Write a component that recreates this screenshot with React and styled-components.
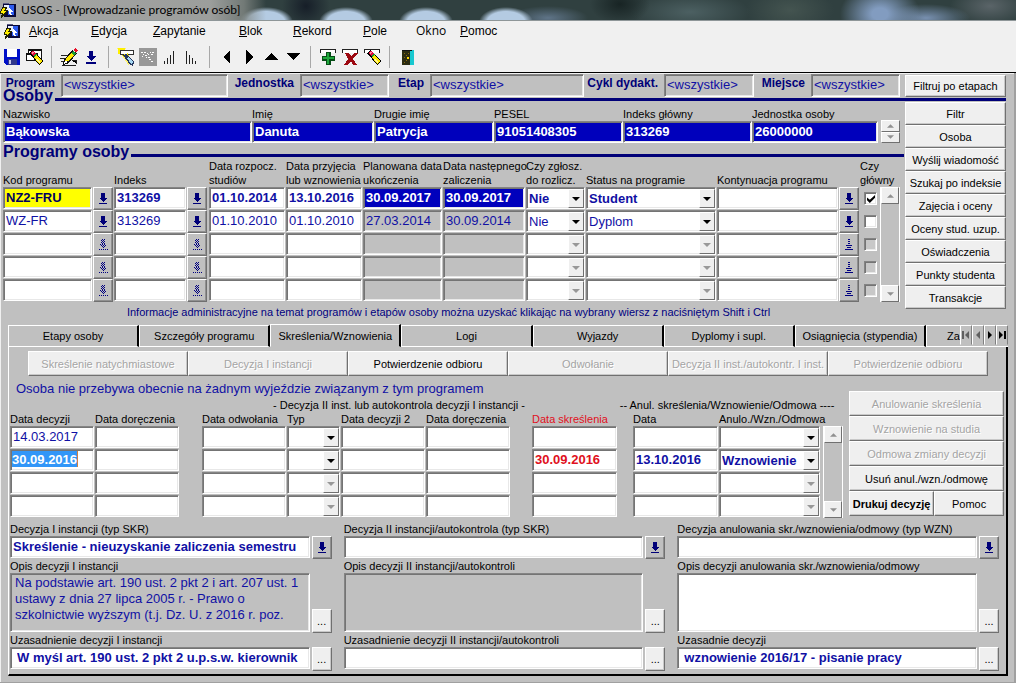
import React, { useState } from "react";
import styled, { createGlobalStyle, css } from "styled-components";

const menuItems = [
  { text: "Akcja", width: 62 },
  { text: "Edycja", width: 62 },
  { text: "Zapytanie", width: 86 },
  { text: "Blok", width: 54 },
  { text: "Rekord", width: 70 },
  { text: "Pole", width: 53 },
  { text: "Okno", width: 44, plain: true },
  { text: "Pomoc", width: 62 },
];

const toolGroups = [
  ["save", "clearForm"],
  ["edit", "list"],
  ["query", "runQuery", "sortAsc", "sortDesc"],
  ["left", "right", "up", "down"],
  ["add", "remove", "clear"],
  ["exit"],
];

const toolNames = {
  save: "Zapisz",
  clearForm: "Wyczyść formularz",
  edit: "Edytuj",
  list: "Lista wartości",
  query: "Wprowadź zapytanie",
  runQuery: "Wykonaj zapytanie",
  sortAsc: "Sortuj rosnąco",
  sortDesc: "Sortuj malejąco",
  left: "Poprzedni blok",
  right: "Następny blok",
  up: "Poprzedni rekord",
  down: "Następny rekord",
  add: "Dodaj rekord",
  remove: "Usuń rekord",
  clear: "Wyczyść rekord",
  exit: "Wyjście",
};

const filters = ["Program", "Jednostka", "Etap", "Cykl dydakt.", "Miejsce"];

const person = [
  { label: "Nazwisko", value: "Bąkowska" },
  { label: "Imię", value: "Danuta" },
  { label: "Drugie imię", value: "Patrycja" },
  { label: "PESEL", value: "91051408305" },
  { label: "Indeks główny", value: "313269" },
  { label: "Jednostka osoby", value: "26000000" },
];

const sideButtons = [
  "Filtr",
  "Osoba",
  "Wyślij wiadomość",
  "Szukaj po indeksie",
  "Zajęcia i oceny",
  "Oceny stud. uzup.",
  "Oświadczenia",
  "Punkty studenta",
  "Transakcje",
];

const programCols = [90, 21, 73, 22, 77, 77, 80, 83, 60, 131, 122, 21, 18];

const programs = [
  {
    code: "NZ2-FRU",
    index: "313269",
    start: "01.10.2014",
    admitted: "13.10.2016",
    planned: "30.09.2017",
    next: "30.09.2017",
    settle: "Nie",
    status: "Student",
    main: true,
    current: true,
  },
  {
    code: "WZ-FR",
    index: "313269",
    start: "01.10.2010",
    admitted: "01.10.2010",
    planned: "27.03.2014",
    next: "30.09.2014",
    settle: "Nie",
    status: "Dyplom",
  },
  { empty: true },
  { empty: true },
  { empty: true },
];

const tabs = [
  "Etapy osoby",
  "Szczegóły programu",
  "Skreślenia/Wznowienia",
  "Logi",
  "Wyjazdy",
  "Dyplomy i supl.",
  "Osiągnięcia (stypendia)",
];

const stepButtons = [
  { text: "Skreślenie natychmiastowe" },
  { text: "Decyzja I instancji" },
  { text: "Potwierdzenie odbioru", enabled: true },
  { text: "Odwołanie" },
  { text: "Decyzja II inst./autokontr. I inst." },
  { text: "Potwierdzenie odbioru" },
];

const decisionCols = [85, 85, 22, 85, 54, 85, 85, 21, 86, 15, 86, 102];

const decisions = [
  { date: "14.03.2017" },
  {
    date: "30.09.2016",
    removed: "30.09.2016",
    resumed: "13.10.2016",
    kind: "Wznowienie",
    current: true,
  },
  { empty: true },
  { empty: true },
];

const details = [
  {
    id: "first",
    labels: [
      "Decyzja I instancji (typ SKR)",
      "Opis decyzji I instancji",
      "Uzasadnienie decyzji I instancji",
    ],
    decision: "Skreślenie - nieuzyskanie zaliczenia semestru",
    text: "Na podstawie art. 190 ust. 2 pkt 2 i art. 207 ust. 1\nustawy z dnia 27 lipca 2005 r. - Prawo o\nszkolnictwie wyższym (t.j. Dz. U. z 2016 r. poz.",
    reason: "W myśl art. 190 ust. 2 pkt 2 u.p.s.w. kierownik",
    locked: true,
  },
  {
    id: "second",
    labels: [
      "Decyzja II instancji/autokontrola (typ SKR)",
      "Opis decyzji II instancji/autokontroli",
      "Uzasadnienie decyzji II instancji/autokontroli",
    ],
    locked: true,
  },
  {
    id: "cancel",
    labels: [
      "Decyzja anulowania skr./wznowienia/odmowy (typ WZN)",
      "Opis decyzji anulowania skr./wznowienia/odmowy",
      "Uzasadnie decyzji",
    ],
    reason: "wznowienie 2016/17 - pisanie pracy",
  },
];

/* ---------- icons ---------- */

const Eraser = () => (
  <>
    <path d="M4 5l4-3 10 11-4 4z" fill="#000" />
    <path d="M9 9l3-2 5 6-3 3z" fill="#ffe800" />
    <path d="M12 10l3 4-1 1-3-4z" fill="#fff8a0" />
    <path d="M8 8l3-2 1 1-3 2z" fill="#0a9a30" />
    <path d="M5 5l3-2 3 3-3 2z" fill="#e01040" />
    <path d="M6 5l2-1 1 1-2 1z" fill="#ff90a8" />
  </>
);

const Bar = () => (
  <path d="M1.5 5V1.5h15V5" fill="#fff" stroke="#222" strokeWidth="1" />
);

const toolIcons = {
  save: (
    <>
      <path d="M1 1h16v16H3l-2-2z" fill="#0010c8" />
      <path d="M4 1h10v8H4z" fill="#fff" />
      <path d="M5 11h9v6H5z" fill="#30388c" />
      <path d="M6 12h2v4H6z" fill="#c8c8e8" />
    </>
  ),
  clearForm: (
    <>
      <path d="M3.5 1.5h13v10h-13z" fill="#fff" stroke="#111" />
      <path d="M3 1h14v2H3z" fill="#111" />
      <path d="M1.5 5.5h11v7h-11z" fill="#fff" stroke="#111" />
      <path d="M1 5h12v2H1z" fill="#111" />
      <Eraser />
    </>
  ),
  edit: (
    <>
      <path d="M1 7.5h7M0 10.5h6M1 13.5h5M12 12.5h4v3M2 17.5h14" stroke="#222" />
      <path d="M3 17l1-5 8-10 5 3-8 10z" fill="#111" />
      <path d="M5 14l1-3 6-7 3 2-6 7z" fill="#ffe800" />
      <path d="M11 5l2-2 3 2-2 2z" fill="#1a9c35" />
      <path d="M13 2l2-2 3 2-2 3z" fill="#e8102a" />
      <path d="M4 16l1-3 3 1z" fill="#fff" />
    </>
  ),
  list: <path d="M7 3h4v5h3l-5 5-5-5h3zM4 14h10v2H4z" fill="#00007c" />,
  query: (
    <>
      <path d="M0 0h9l-4 7 7 7v4z" fill="#fff26a" />
      <path d="M1 0h7v6H1z" fill="#fff000" />
      <path d="M3.5 2.5h13v4h-13z" fill="#fff" stroke="#333" />
      <path d="M4 8l7-3 2 6z" fill="#ffee00" />
      <path d="M6 7l4-1 7 8-1 4-3-1z" fill="#24365e" />
      <path d="M10 10l2-1 4 5-1 3z" fill="#a6d8f4" />
      <path d="M11 11l1 0 3 4z" fill="#fff" />
    </>
  ),
  runQuery: (
    <>
      <path d="M0 0h18v18H0z" fill="#989898" />
      <path
        d="M2 4.500h2M5 4.500h2M8 5.500h1M11 4.500h1M13 4.500h2M4 6.500h1M6 7.500h2M9 6.500h1M12 6.500h2M3 8.500h1M7 9.500h1M9 9.500h2M10 11.500h2M12 13.500h2"
        stroke="#fff"
      />
    </>
  ),
  sortAsc: (
    <path d="M3 13h1v3H3zM6 10h1v6H6zM9 7h1v9H9zM12 3h1v13h-1z" fill="#222" />
  ),
  sortDesc: (
    <path d="M3 3h1v13H3zM6 7h1v9H6zM9 10h1v6H9zM12 13h1v3h-1z" fill="#222" />
  ),
  left: <path d="M12 2v14L5 9z" fill="#000" />,
  right: <path d="M6 2v14l7-7z" fill="#000" />,
  up: <path d="M2 12h14L9 5z" fill="#000" />,
  down: <path d="M2 5h14l-7 7z" fill="#000" />,
  add: (
    <>
      <Bar />
      <path d="M7 4h5v4h4v5h-4v4H7v-4H3V8h4z" fill="#064d16" />
      <path d="M8 5h2v4h5v2h-5v5H8v-5H4V9h4z" fill="#1fa83c" />
    </>
  ),
  remove: (
    <>
      <Bar />
      <path
        d="M4 5h4l2 3 3-3h4l-5 6 4 6h-4l-2-4-3 4H3l4-6z"
        fill="#9c0810"
      />
    </>
  ),
  clear: (
    <>
      <Bar />
      <Eraser />
    </>
  ),
  exit: (
    <>
      <path d="M4 2h12v15H4z" fill="#18c8d0" />
      <path d="M4 2h10v1H4z" fill="#111" />
      <path d="M4 3h8v14H4z" fill="#2c2c10" />
      <path d="M6 5h1v1H6zM8 7h1v1H8zM6 9h1v1H6zM10 5h1v1h-1zM8 12h1v1H8zM6 14h1v1H6z" fill="#8a6a10" />
      <path d="M9 9h2v2H9z" fill="#ffd800" />
    </>
  ),
};

const AppIcon = () => (
  <svg width="17" height="16" viewBox="0 0 17 16" shapeRendering="crispEdges">
    <path d="M3 1h6v3H3z" fill="#5a5a84" />
    <path d="M3 2h13v13H4z" fill="#080838" />
    <path d="M8 3h6v10H8z" fill="#2e5cf0" />
    <path d="M4 3h5v6H4z" fill="#e8f0ff" />
    <path d="M9 5l4 5-2 0 1 3-2 0-1-2z" fill="#fff" />
    <path d="M3 5h4L5 8h3l-7 8 2-5H0z" fill="#ffee00" stroke="#222200" strokeWidth="1" />
  </svg>
);

const LovIcon = ({ variant }) => (
  <svg width="10" height="14" viewBox="0 0 10 14" shapeRendering="crispEdges">
    {variant === "dots" && (
      <path
        d="M4 1h1M6 1h1M3 2h1M5 2h1M4 3h1M6 3h1M3 4h1M5 4h1M4 5h1M6 5h1M2 6h1M4 6h1M6 6h1M3 7h1M5 7h1M7 7h1M4 8h1M6 8h1M5 9h1M1 11h1M3 11h1M5 11h1M7 11h1M9 11h1"
        transform="translate(0 .5)"
        stroke="#000080"
      />
    )}
    {variant === "lines" && (
      <path
        d="M4 1h2M4 3h2M4 5h2M2 7h6M3 9h4M1 11h8"
        transform="translate(0 .5)"
        stroke="#000080"
      />
    )}
    {!variant && (
      <path d="M3 1h4v5h2L5 10 1 6h2zM1 11h8v1H1z" fill="#000078" />
    )}
  </svg>
);

const Triangle = ({ up, size = 7 }) => (
  <svg width={size} height="4" viewBox="0 0 8 4">
    <path d={up ? "M0 4h8L4 0z" : "M0 0h8L4 4z"} fill="currentColor" />
  </svg>
);

/* ---------- pieces ---------- */

const Combo = ({ label, value = "", disabled }) => (
  <ComboBox $disabled={disabled}>
    <select aria-label={label} defaultValue={value} disabled={disabled}>
      <option>{value}</option>
    </select>
    <span>
      <Triangle size={8} />
    </span>
  </ComboBox>
);

const Lov = ({ label, variant }) => (
  <LovButton type='button' aria-label={label} disabled={!!variant}>
    <LovIcon variant={variant} />
  </LovButton>
);

const Scroller = () => (
  <ScrollBar>
    <button type='button' aria-label='W górę'>
      <Triangle up />
    </button>
    <button type='button' aria-label='W dół'>
      <Triangle />
    </button>
  </ScrollBar>
);

const Cols = ({ widths }) => (
  <colgroup>
    {widths.map((width, i) => (
      <col key={i} width={width} />
    ))}
  </colgroup>
);

const Programs = () => (
  <BlockTable>
    <Cols widths={programCols} />
    <thead>
      <tr>
        <th colSpan={2}>Kod programu</th>
        <th colSpan={2}>Indeks</th>
        <th>
          Data rozpocz.
          <br />
          studiów
        </th>
        <th>
          Data przyjęcia
          <br />
          lub wznowienia
        </th>
        <th>
          Planowana data
          <br />
          ukończenia
        </th>
        <th>
          Data następnego
          <br />
          zaliczenia
        </th>
        <th>
          Czy zgłosz.
          <br />
          do rozlicz.
        </th>
        <th>Status na programie</th>
        <th colSpan={2}>Kontynuacja programu</th>
        <th>
          Czy
          <br />
          główny
        </th>
      </tr>
    </thead>
    <tbody>
      {programs.map((row, i) => {
        const { current, empty } = row;
        const dates = current ? "blue" : "grey";
        return (
          <tr key={i}>
            <td>
              <Field
                aria-label='Kod programu'
                defaultValue={row.code}
                $bold={current}
                $tone={current ? "yellow" : undefined}
              />
            </td>
            <td>
              <Lov label='Lista programów' variant={empty && "dots"} />
            </td>
            <td>
              <Field aria-label='Indeks' defaultValue={row.index} $bold={current} />
            </td>
            <td>
              <Lov label='Lista indeksów' variant={empty && "dots"} />
            </td>
            <td>
              <Field aria-label='Data rozpoczęcia' defaultValue={row.start} $bold={current} />
            </td>
            <td>
              <Field aria-label='Data przyjęcia' defaultValue={row.admitted} $bold={current} />
            </td>
            <td>
              <Field aria-label='Planowana data ukończenia' readOnly value={row.planned || ""} $bold={current} $tone={dates} />
            </td>
            <td>
              <Field aria-label='Data następnego zaliczenia' readOnly value={row.next || ""} $bold={current} $tone={dates} />
            </td>
            <td>
              <Combo label='Czy zgłoszony do rozliczenia' value={row.settle} disabled={empty} />
            </td>
            <td>
              <Combo label='Status na programie' value={row.status} disabled={empty} />
            </td>
            <td>
              <Field aria-label='Kontynuacja programu' />
            </td>
            <td>
              <Lov label='Lista kontynuacji' variant={empty && "lines"} />
            </td>
            <td>
              <Check type='checkbox' aria-label='Czy główny' defaultChecked={row.main} disabled={empty} />
            </td>
          </tr>
        );
      })}
    </tbody>
  </BlockTable>
);

const Decisions = () => (
  <BlockTable>
    <Cols widths={decisionCols} />
    <thead>
      <tr>
        <td colSpan={4} />
        <th colSpan={3}>
          <GroupTitle>- Decyzja II inst. lub autokontrola decyzji I instancji -</GroupTitle>
        </th>
        <td colSpan={3} />
        <th colSpan={2}>
          <GroupTitle>-- Anul. skreślenia/Wznowienie/Odmowa ----</GroupTitle>
        </th>
      </tr>
      <tr>
        <th>Data decyzji</th>
        <th>Data doręczenia</th>
        <td />
        <th>Data odwołania</th>
        <th>Typ</th>
        <th>Data decyzji 2</th>
        <th>Data doręczenia</th>
        <td />
        <th className='alert'>Data skreślenia</th>
        <td />
        <th>Data</th>
        <th>Anulo./Wzn./Odmowa</th>
      </tr>
    </thead>
    <tbody>
      {decisions.map((row, i) => (
        <tr key={i}>
          <td>
            {row.current ? (
              <SelectedField>
                <input aria-label='Data decyzji' defaultValue={row.date} />
              </SelectedField>
            ) : (
              <Field aria-label='Data decyzji' defaultValue={row.date} />
            )}
          </td>
          <td>
            <Field aria-label='Data doręczenia' />
          </td>
          <td />
          <td>
            <Field aria-label='Data odwołania' />
          </td>
          <td>
            <Combo label='Typ' disabled={row.empty} />
          </td>
          <td>
            <Field aria-label='Data decyzji 2' />
          </td>
          <td>
            <Field aria-label='Data doręczenia 2' />
          </td>
          <td />
          <td>
            <Field aria-label='Data skreślenia' defaultValue={row.removed} $bold $tone='red' />
          </td>
          <td />
          <td>
            <Field aria-label='Data wznowienia' defaultValue={row.resumed} $bold />
          </td>
          <td>
            <Combo label='Anulowanie lub wznowienie' value={row.kind} disabled={row.empty} />
          </td>
        </tr>
      ))}
    </tbody>
  </BlockTable>
);

const App = () => {
  const [active, setActive] = useState(2);
  return (
    <Window>
      <GlobalStyle />
      <TitleBar>
        <AppIcon />
        <h1>USOS - [Wprowadzanie programów osób]</h1>
      </TitleBar>
      <MenuBar>
        <AppIcon />
        {menuItems.map(({ text, width, plain }) => (
          <MenuButton key={text} type='button' $width={width} $plain={plain}>
            {plain ? (
              text
            ) : (
              <>
                <u>{text[0]}</u>
                {text.slice(1)}
              </>
            )}
          </MenuButton>
        ))}
      </MenuBar>
      <ToolBar>
        {toolGroups.map((group, i) => (
          <ToolGroup key={i}>
            {group.map((name) => (
              <ToolButton key={name} type='button' aria-label={toolNames[name]}>
                <svg width='18' height='18' viewBox='0 0 18 18' shapeRendering='crispEdges'>
                  {toolIcons[name]}
                </svg>
              </ToolButton>
            ))}
          </ToolGroup>
        ))}
      </ToolBar>

      <Form>
        <FilterRow>
          {filters.map((name) => (
            <React.Fragment key={name}>
              <label htmlFor={`filter-${name}`}>{name}</label>
              <Field id={`filter-${name}`} readOnly value='<wszystkie>' $tone='grey' />
            </React.Fragment>
          ))}
          <Button type='button'>Filtruj po etapach</Button>
        </FilterRow>
        <Heading $overlap>
          <h2>Osoby</h2>
        </Heading>

        <Upper>
          <div>
            <PersonRow>
              <PersonFields>
                {person.map(({ label, value }) => (
                  <label key={label}>
                    {label}
                    <Field readOnly value={value} $bold $tone='blue' />
                  </label>
                ))}
              </PersonFields>
              <Spinner>
                <button type='button' aria-label='Poprzednia osoba'>
                  <Triangle up />
                </button>
                <button type='button' aria-label='Następna osoba'>
                  <Triangle />
                </button>
              </Spinner>
            </PersonRow>
            <Heading>
              <h2>Programy osoby</h2>
            </Heading>
            <ProgramBlock>
              <Programs />
              <Scroller />
            </ProgramBlock>
            <Hint>
              Informacje administracyjne na temat programów i etapów osoby można
              uzyskać klikając na wybrany wiersz z naciśniętym Shift i Ctrl
            </Hint>
          </div>
          <SideButtons>
            {sideButtons.map((text) => (
              <Button key={text} type='button'>
                {text}
              </Button>
            ))}
          </SideButtons>
        </Upper>

        <TabStrip>
          {tabs.map((text, i) => (
            <Tab key={text} type='button' $active={i === active} onClick={() => setActive(i)}>
              {text}
            </Tab>
          ))}
          <Tab type='button' $cut>
            Za
          </Tab>
          <TabNav>
            <button type='button' aria-label='Pierwsza zakładka' disabled>
              <svg width='8' height='8' viewBox='0 0 8 8'>
                <path d='M0 0h2v8H0zM7 0v8L3 4z' fill='currentColor' />
              </svg>
            </button>
            <button type='button' aria-label='Poprzednia zakładka' disabled>
              <svg width='8' height='8' viewBox='0 0 8 8'>
                <path d='M6 0v8L2 4z' fill='currentColor' />
              </svg>
            </button>
            <button type='button' aria-label='Następna zakładka'>
              <svg width='8' height='8' viewBox='0 0 8 8'>
                <path d='M2 0v8l4-4z' fill='currentColor' />
              </svg>
            </button>
            <button type='button' aria-label='Ostatnia zakładka'>
              <svg width='8' height='8' viewBox='0 0 8 8'>
                <path d='M1 0v8l4-4zM6 0h2v8H6z' fill='currentColor' />
              </svg>
            </button>
          </TabNav>
        </TabStrip>

        <Panel>
          <Steps>
            {stepButtons.map(({ text, enabled }, i) => (
              <Button key={i} type='button' disabled={!enabled}>
                {text}
              </Button>
            ))}
          </Steps>
          <DecisionArea>
            <div>
              <Message>
                Osoba nie przebywa obecnie na żadnym wyjeździe związanym z tym
                programem
              </Message>
              <DecisionBlock>
                <Decisions />
                <Scroller />
              </DecisionBlock>
            </div>
            <DecisionButtons>
              <Button type='button' disabled>
                Anulowanie skreślenia
              </Button>
              <Button type='button' disabled>
                Wznowienie na studia
              </Button>
              <Button type='button' disabled>
                Odmowa zmiany decyzji
              </Button>
              <Button type='button'>Usuń anul./wzn./odmowę</Button>
              <div>
                <Button type='button' $bold>
                  Drukuj decyzję
                </Button>
                <Button type='button'>Pomoc</Button>
              </div>
            </DecisionButtons>
          </DecisionArea>
          <Details>
            {details.map(({ id, labels, decision, text, reason, locked }) => (
              <Detail key={id}>
                <label htmlFor={`${id}-decision`}>{labels[0]}</label>
                <Field id={`${id}-decision`} defaultValue={decision} $bold />
                <Lov label='Lista decyzji' />
                <label htmlFor={`${id}-text`}>{labels[1]}</label>
                <TextBox id={`${id}-text`} defaultValue={text} $locked={locked} readOnly={locked} />
                <Button type='button' aria-label='Edytuj opis'>
                  ...
                </Button>
                <label htmlFor={`${id}-reason`}>{labels[2]}</label>
                <Field id={`${id}-reason`} defaultValue={reason} $bold $indent />
                <Button type='button' aria-label='Edytuj uzasadnienie'>
                  ...
                </Button>
              </Detail>
            ))}
          </Details>
        </Panel>
      </Form>
    </Window>
  );
};

/* ---------- styles ---------- */

const GlobalStyle = createGlobalStyle`
  * {
    box-sizing: border-box;
  }
  body {
    margin: 0;
    background: #c0c0c0;
  }
  body, button, input, select, textarea {
    font-family: "Liberation Sans", Arial, sans-serif;
    font-size: 11px;
    line-height: 14px;
    color: #000;
  }
  h1, h2, p {
    margin: 0;
  }
  svg {
    display: block;
    flex: none;
  }
`;

const raised = css`
  border: 1px solid;
  border-color: #fff #707070 #707070 #fff;
`;

const sunken = css`
  border: 1px solid;
  border-color: #848484 #fff #fff #848484;
  box-shadow: inset 1px 1px #747474, inset -1px -1px #e8e8e8;
`;

const Window = styled.div`
  min-width: 980px;
`;

const TitleBar = styled.header`
  display: flex;
  align-items: center;
  gap: 4px;
  height: 21px;
  border-bottom: 1px solid #8e9698;
  background:
    linear-gradient(90deg, #a4a5a4 0, #9c9e9c 210px, rgba(130, 136, 132, 0.8) 244px, rgba(90, 98, 96, 0) 266px),
    radial-gradient(ellipse 27px 15px at 266px 22px, #b4cbe2 70%, transparent),
    radial-gradient(ellipse 27px 15px at 346px 22px, #b4cbe2 70%, transparent),
    radial-gradient(ellipse 27px 15px at 426px 22px, #b4cbe2 70%, transparent),
    radial-gradient(ellipse 27px 15px at 506px 22px, #b4cbe2 70%, transparent),
    radial-gradient(ellipse 24px 24px at 306px 6px, #161e28, transparent),
    radial-gradient(ellipse 40px 12px at 548px 18px, #5f7488, transparent),
    radial-gradient(ellipse 30px 20px at 620px 4px, #182424, transparent),
    radial-gradient(ellipse 60px 20px at 690px 12px, #4c6062, transparent),
    radial-gradient(ellipse 44px 24px at 790px 10px, #445450, transparent),
    radial-gradient(ellipse 40px 30px at 880px 14px, #829cc0 20%, transparent),
    radial-gradient(ellipse 44px 14px at 926px 18px, #7890b0, transparent),
    radial-gradient(ellipse 40px 20px at 990px 6px, #5a6468, transparent),
    #304040;
  h1 {
    font: 12px/18px Lato, "Open Sans", sans-serif;
  }
`;

const MenuBar = styled.nav`
  display: flex;
  align-items: center;
  height: 19px;
  padding-left: 4px;
  background: #f0f0f0;
`;

const MenuButton = styled.button`
  flex: none;
  width: ${({ $width }) => $width}px;
  padding: 0 0 0 8px;
  border: 0;
  background: none;
  font-size: 12px;
  text-align: left;
  ${({ $plain }) => $plain && 'font-family: "Open Sans", sans-serif;'}
`;

const ToolBar = styled.div`
  display: flex;
  align-items: center;
  height: 33px;
  padding: 2px 0 0 1px;
  border-bottom: 1px solid #000;
  background: #f0f0f0;
`;

const ToolGroup = styled.div`
  display: flex;
  & + & {
    margin-left: 6px;
    padding-left: 6px;
    border-left: 1px solid #a8a8a8;
  }
`;

const ToolButton = styled.button`
  display: grid;
  place-items: center;
  width: 22px;
  height: 22px;
  padding: 0;
  border: 0;
  background: none;
`;

const Form = styled.main`
  padding-bottom: 6px;
  border: solid #a0a0a0;
  border-width: 0 2px 2px 0;
  background: #c0c0c0;
  box-shadow: inset 1px 1px #f0f0f0;
`;

const tones = {
  grey: css`
    background: #c0c0c0;
  `,
  blue: css`
    background: #0000bc;
    color: #fff;
  `,
  yellow: css`
    background: #ffff00;
    color: #000060;
  `,
  red: css`
    color: #e01020;
  `,
};

const Field = styled.input`
  ${sunken}
  display: block;
  width: 100%;
  min-width: 0;
  height: 22px;
  padding: 0 1px 2px ${({ $indent }) => ($indent ? 6 : 2)}px;
  border-radius: 0;
  outline: 0;
  background: #fff;
  color: #1010a4;
  font-size: 13px;
  font-weight: ${({ $bold }) => ($bold ? "bold" : "normal")};
  ${({ $tone }) => tones[$tone]}
`;

const SelectedField = styled.div`
  ${sunken}
  height: 22px;
  padding: 1px;
  background: #fff;
  input {
    display: block;
    width: 66px;
    height: 16px;
    padding: 0;
    border: 0;
    border-right: 1px solid #d08040;
    outline: 0;
    background: #3296f8;
    color: #fff;
    font-size: 13px;
    font-weight: bold;
  }
`;

const Button = styled.button`
  ${raised}
  min-width: 0;
  padding: 0;
  border-radius: 0;
  background: #efefef;
  font-weight: ${({ $bold }) => ($bold ? "bold" : "normal")};
  white-space: nowrap;
  box-shadow: inset -1px -1px #c8c8c8;
  &:disabled {
    color: #a4a4a4;
    text-shadow: 1px 1px #fff;
  }
`;

const LovButton = styled.button`
  ${raised}
  display: grid;
  place-items: center;
  width: 20px;
  height: 23px;
  padding: 0;
  background: #c0c0c0;
  box-shadow: inset -1px -1px #909090;
`;

const ComboBox = styled.div`
  ${sunken}
  position: relative;
  height: 22px;
  background: #fff;
  select {
    display: block;
    width: 100%;
    height: 20px;
    padding: 2px 17px 0 2px;
    border: 0;
    outline: 0;
    appearance: none;
    background: none;
    color: #1010a4;
    font-size: 13px;
    opacity: 1;
  }
  span {
    ${raised}
    position: absolute;
    top: 1px;
    right: 0;
    bottom: 0;
    display: grid;
    place-items: center;
    width: 16px;
    background: #efefef;
    color: ${({ $disabled }) => ($disabled ? "#989898" : "#000")};
    pointer-events: none;
  }
`;

const Check = styled.input`
  ${sunken}
  display: block;
  width: 13px;
  height: 13px;
  margin: 0 0 0 4px;
  appearance: none;
  background: #fff;
  &:disabled {
    background: #c8c8c8;
  }
  &:checked::after {
    content: "";
    display: block;
    width: 8px;
    height: 8px;
    margin: 2px;
    background: #000;
    clip-path: polygon(0 30%, 35% 60%, 100% 0, 100% 35%, 35% 100%, 0 65%);
  }
`;

const FilterRow = styled.div`
  display: grid;
  grid-template-columns: 58px 167fr 72px 89fr 41px 154fr 80px 90fr 57px 89fr 5px 101px;
  align-items: end;
  height: 24px;
  padding: 0 8px 0 3px;
  label {
    align-self: center;
    padding: 0 6px 4px 0;
    color: #000078;
    font-size: 12px;
    font-weight: bold;
    text-align: right;
    white-space: nowrap;
  }
  ${Field} {
    height: 23px;
  }
  ${Button} {
    grid-column: 12;
    height: 22px;
  }
`;

const Heading = styled.div`
  display: flex;
  align-items: baseline;
  gap: 2px;
  height: 15px;
  ${({ $overlap }) =>
    $overlap &&
    css`
      margin: -10px 8px 0 3px;
    `}
  h2 {
    color: #000078;
    font-size: 16px;
    line-height: 18px;
  }
  &::after {
    content: "";
    flex: 1;
    height: 3px;
    background: #000078;
  }
`;

const Upper = styled.div`
  display: grid;
  grid-template-columns: 1fr 101px;
  gap: 1px;
  padding: 0 8px 0 3px;
`;

const PersonRow = styled.div`
  display: flex;
  align-items: flex-end;
  gap: 3px;
  height: 41px;
  padding-right: 4px;
`;

const PersonFields = styled.div`
  display: grid;
  flex: 1;
  grid-template-columns: 249fr 122fr 120fr 129fr 129fr 126fr;
`;

const Spinner = styled.div`
  display: flex;
  flex-direction: column;
  width: 19px;
  height: 23px;
  button {
    ${raised}
    display: grid;
    flex: 1;
    place-items: center;
    padding: 0;
    background: #efefef;
    color: #909090;
  }
`;

const BlockTable = styled.table`
  flex: 1;
  width: 0;
  table-layout: fixed;
  border-collapse: collapse;
  th,
  td {
    padding: 0;
  }
  th {
    font-weight: normal;
    text-align: left;
    vertical-align: bottom;
    white-space: nowrap;
  }
  .alert {
    color: #e01020;
  }
  tbody tr {
    height: 23px;
  }
  tbody td {
    padding-right: 1px;
    vertical-align: top;
  }
  tbody td:has(${Check}) {
    vertical-align: middle;
  }
  tbody tr:has(${SelectedField}) select,
  tbody tr:has(${Check}:checked) select {
    font-weight: bold;
  }
`;

const ProgramBlock = styled.div`
  display: flex;
  align-items: flex-end;
  gap: 2px;
  margin-top: 1px;
  padding-right: 4px;
`;

const ScrollBar = styled.div`
  display: flex;
  flex-direction: column;
  justify-content: space-between;
  align-self: flex-end;
  width: 20px;
  height: 115px;
  border: solid;
  border-width: 0 1px;
  border-color: #808080 #fff;
  button {
    ${raised}
    display: grid;
    place-items: center;
    height: 17px;
    padding: 0;
    background: #efefef;
    color: #909090;
  }
`;

const Hint = styled.p`
  margin-top: 3px;
  padding-right: 10px;
  color: #000080;
  text-align: center;
  white-space: nowrap;
`;

const SideButtons = styled.div`
  display: flex;
  flex-direction: column;
  ${Button} {
    height: 23px;
  }
`;

const TabStrip = styled.div`
  display: grid;
  grid-template-columns: repeat(7, 131fr) 34fr auto;
  align-items: end;
  height: 23px;
  margin: 5px 6px 0 8px;
`;

const Tab = styled.button`
  min-width: 0;
  height: ${({ $active }) => ($active ? 23 : 22)}px;
  padding: 0;
  border: solid;
  border-width: 1px 2px 1px 1px;
  border-color: #fff #000 #fff #fff;
  background: #c0c0c0;
  white-space: nowrap;
  ${({ $active }) =>
    $active &&
    css`
      border-bottom-color: #c0c0c0;
    `}
  ${({ $cut }) =>
    $cut &&
    css`
      padding-left: 20px;
      border-right: 0;
      overflow: hidden;
      text-align: left;
    `}
`;

const TabNav = styled.div`
  display: flex;
  height: 22px;
  border-bottom: 1px solid #fff;
  button {
    display: grid;
    place-items: center;
    width: 12px;
    height: 20px;
    padding: 0;
    border: 1px solid;
    border-color: #fff #808080 #c0c0c0 #fff;
    background: #c0c0c0;
    color: #000;
  }
  button:disabled {
    color: #606060;
  }
`;

const Panel = styled.section`
  margin: 0 6px 0 8px;
  padding: 4px 1px 3px;
  border: solid;
  border-width: 0 2px 2px 1px;
  border-color: #000 #000 #000 #fff;
`;

const Steps = styled.div`
  display: grid;
  grid-template-columns: repeat(6, 1fr);
  margin: 0 17px 0 18px;
  ${Button} {
    height: 25px;
  }
`;

const DecisionArea = styled.div`
  display: grid;
  grid-template-columns: 1fr 155px;
  gap: 6px;
  padding-right: 2px;
`;

const Message = styled.p`
  margin: 5px 0 1px 6px;
  color: #1010a4;
  font-size: 13px;
  line-height: 16px;
`;

const GroupTitle = styled.div`
  display: flex;
  justify-content: center;
`;

const DecisionBlock = styled.div`
  display: flex;
  gap: 2px;
  ${ScrollBar} {
    height: 92px;
  }
`;

const DecisionButtons = styled.div`
  display: flex;
  flex-direction: column;
  padding-top: 15px;
  ${Button} {
    height: 25px;
  }
  div {
    display: grid;
    grid-template-columns: 85fr 70fr;
  }
`;

const Details = styled.div`
  display: grid;
  grid-template-columns: repeat(3, 1fr);
  gap: 12px;
  padding: 4px 6px 0 0;
`;

const Detail = styled.div`
  display: grid;
  grid-template-columns: 1fr 20px;
  column-gap: 2px;
  label {
    grid-column: 1 / -1;
    white-space: nowrap;
  }
  ${Button} {
    align-self: end;
    height: 24px;
  }
`;

const TextBox = styled.textarea`
  ${sunken}
  display: block;
  width: 100%;
  height: 59px;
  margin-bottom: 1px;
  padding: 1px 4px;
  border-radius: 0;
  outline: 0;
  overflow: hidden;
  resize: none;
  background: ${({ $locked }) => ($locked ? "#c0c0c0" : "#fff")};
  color: #1010a4;
  font-size: 13px;
  line-height: 16px;
  white-space: pre;
`;

export default App;
